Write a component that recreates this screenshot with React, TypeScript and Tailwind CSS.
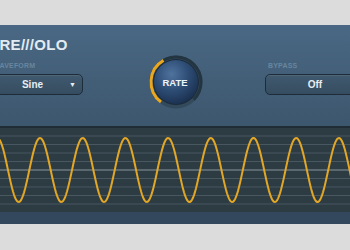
const PANEL_W = 394;

const buildWave = () => {
  const pts: string[] = [];
  for (let x = 0; x <= PANEL_W; x += 1) {
    const y = 42 - 32 * Math.cos((2 * Math.PI * (x - 62)) / 42.7);
    pts.push(`${x === 0 ? "M" : "L"}${x},${y.toFixed(2)}`);
  }
  return pts.join(" ");
};

const polar = (cx: number, cy: number, r: number, deg: number) => {
  const a = (deg * Math.PI) / 180;
  return [cx + r * Math.sin(a), cy - r * Math.cos(a)];
};

const arc = (r: number, from: number, to: number) => {
  const [x1, y1] = polar(28, 28, r, from);
  const [x2, y2] = polar(28, 28, r, to);
  const large = to - from > 180 ? 1 : 0;
  return `M${x1.toFixed(2)},${y1.toFixed(2)} A${r},${r} 0 ${large} 1 ${x2.toFixed(2)},${y2.toFixed(2)}`;
};

const Knob = () => (
  <svg width="56" height="56" viewBox="0 0 56 56">
    <defs>
      <radialGradient id="knobBody" cx="40%" cy="32%" r="70%">
        <stop offset="0%" stopColor="#4f739e" />
        <stop offset="55%" stopColor="#2d4c74" />
        <stop offset="100%" stopColor="#1b3150" />
      </radialGradient>
    </defs>
    <circle cx="28" cy="28" r="26.5" fill="#2a3d4b" opacity="0.55" />
    <path d={arc(25, 225, 495)} stroke="#233541" strokeWidth="3" fill="none" />
    <path d={arc(25, 217, 330)} stroke="#e9a722" strokeWidth="3" fill="none" />
    <circle cx="28" cy="28" r="23" fill="#1a2b39" />
    <circle cx="28" cy="28" r="22" fill="url(#knobBody)" />
    <text
      x="27"
      y="31.5"
      textAnchor="middle"
      fill="#eef3f8"
      fontSize="9.5"
      fontWeight="700"
      fontFamily="'Liberation Sans', sans-serif"
    >
      RATE
    </text>
  </svg>
);

const Label = ({ text }: { text: string }) => (
  <div className="h-[10px] pl-[3px] text-[7px] leading-[10px] font-bold tracking-[0.2px] text-[#6786a0]">
    {text}
  </div>
);

export default function App() {
  const gridLines = [-4, -3, -2, -1, 1, 2, 3, 4];

  return (
    <div
      className="w-[350px] h-[250px] bg-[#dcdcdc] overflow-hidden pt-[25px]"
      style={{ fontFamily: "'Liberation Sans', Arial, sans-serif" }}
    >
      <div className="w-[394px] -ml-[22px] h-[199px] flex flex-col bg-gradient-to-b from-[#4a6884] to-[#304658]">
        <div className="h-[101px] flex items-start pt-[12px] pl-[12px]">
          <div className="w-[93px] flex flex-col">
            <div className="h-[16px] text-[15px] leading-[16px] font-bold text-[#e2ebf2] tracking-[0.3px]">
              TRE///OLO
            </div>
            <div className="mt-[8px]">
              <Label text="WAVEFORM" />
            </div>
            <div className="relative mt-[3px] h-[21px] rounded-[5px] border border-[#1d2c38] bg-gradient-to-b from-[#40596e] to-[#364d61] shadow-[inset_0_1px_0_rgba(255,255,255,0.08)] flex items-center justify-center pr-2">
              <span className="text-[10px] font-bold text-[#e6edf3]">Sine</span>
              <span className="absolute right-[6px] top-[5px] text-[7px] text-[#e6edf3]">▼</span>
            </div>
          </div>
          <div className="ml-[65px] mt-[17px]">
            <Knob />
          </div>
          <div className="ml-[61px] w-[100px] flex flex-col pt-[24px]">
            <Label text="BYPASS" />
            <div className="mt-[3px] h-[21px] rounded-[5px] border border-[#1d2c38] bg-gradient-to-b from-[#40596e] to-[#364d61] shadow-[inset_0_1px_0_rgba(255,255,255,0.08)] flex items-center justify-center">
              <span className="text-[10px] font-bold text-[#e6edf3]">Off</span>
            </div>
          </div>
        </div>
        <div className="h-[86px] border-t-2 border-[#1f2c36] bg-[#2d3b43]">
          <svg width={PANEL_W} height="84" viewBox={`0 0 ${PANEL_W} 84`} className="block">
            {gridLines.map((k) => (
              <line
                key={k}
                x1="0"
                x2={PANEL_W}
                y1={42 + k * 8.5}
                y2={42 + k * 8.5}
                stroke="#55656d"
                strokeWidth="1"
                opacity="0.7"
              />
            ))}
            <line x1="0" x2={PANEL_W} y1="42" y2="42" stroke="#8a979c" strokeWidth="1" />
            <path d={buildWave()} stroke="#e3a726" strokeWidth="2" fill="none" />
          </svg>
        </div>
        <div className="h-[12px] bg-[#34485d]" />
      </div>
    </div>
  );
}
